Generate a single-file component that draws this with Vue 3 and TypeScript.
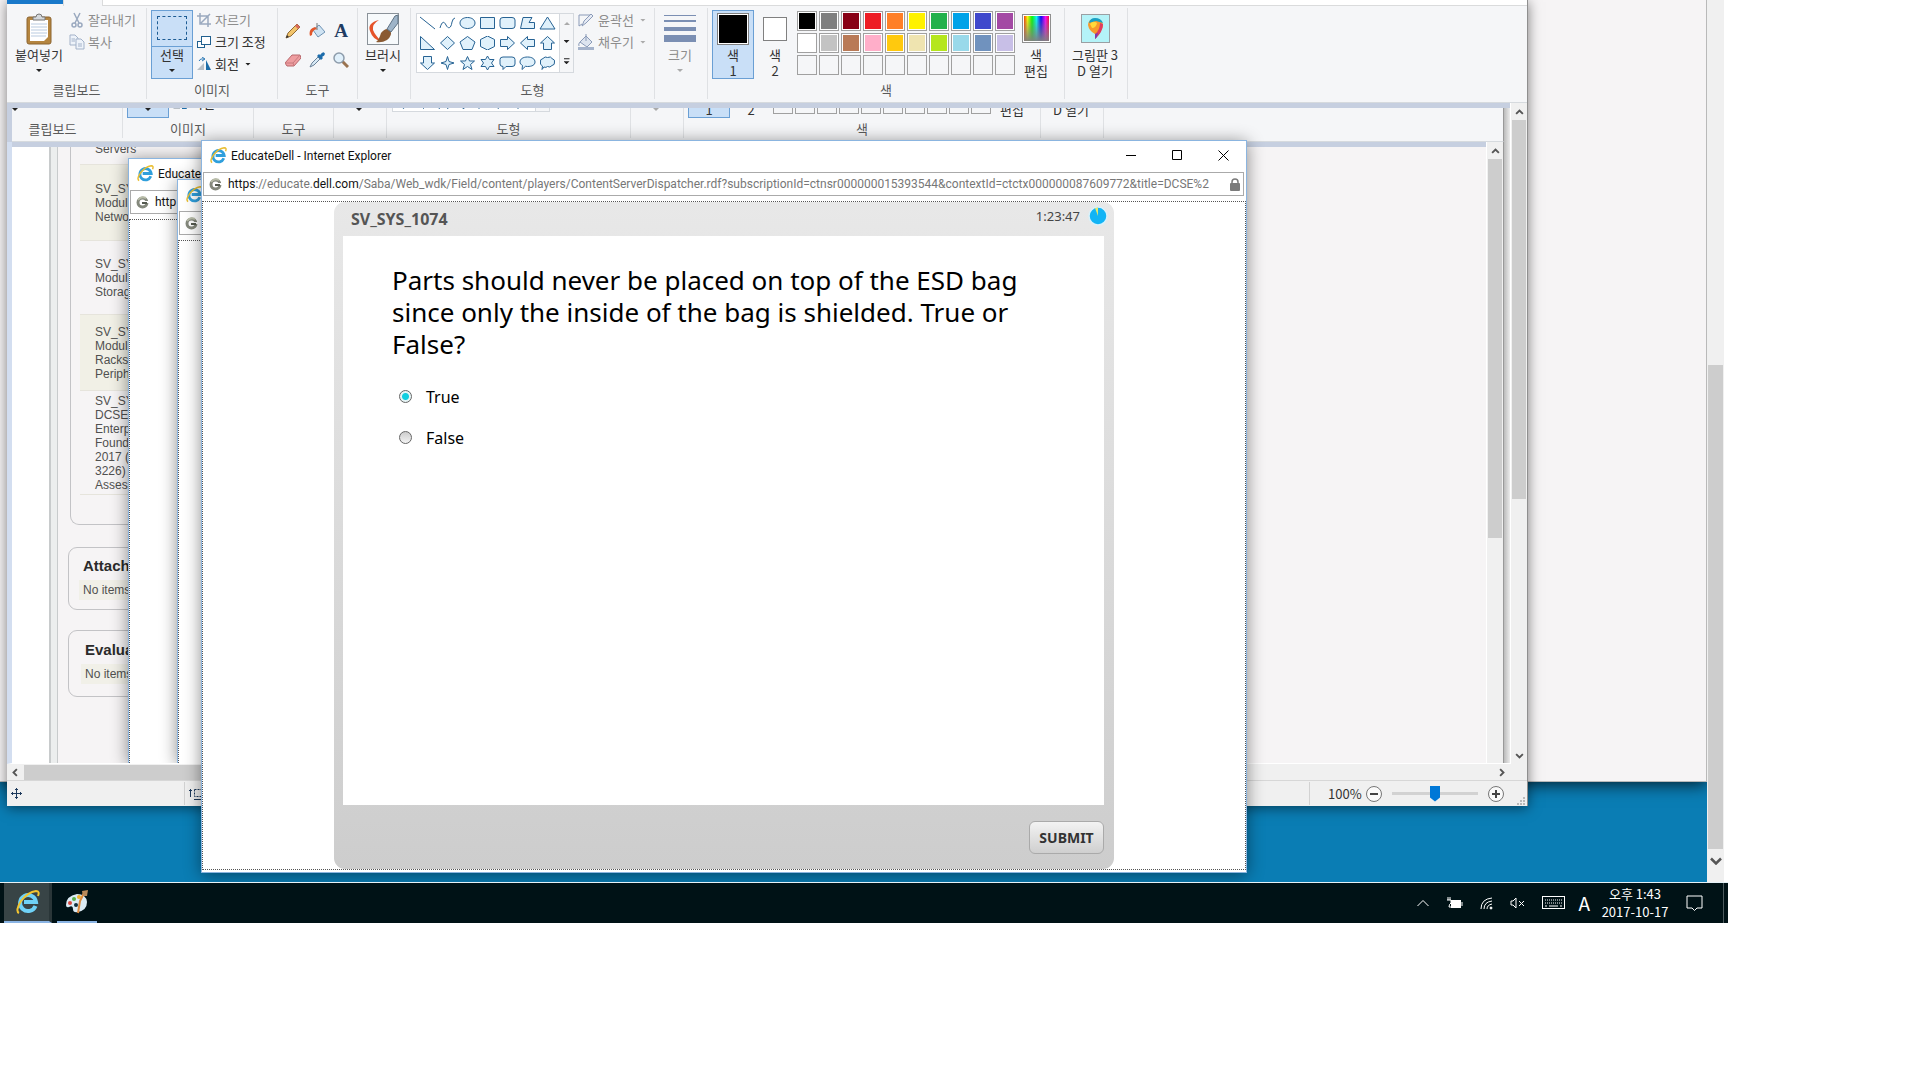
<script setup lang="ts">
import { ref } from 'vue'

interface Popup {
  id: string
  title: string
  scheme: string
  left: number
  top: number
  width: number
  height: number
  front: boolean
}

const strips: string[] = ['live', 'pasted']

const popups: Popup[] = [
  { id: 'back', title: 'Educate', scheme: 'http', left: 128, top: 158, width: 120, height: 605, front: false },
  { id: 'middle', title: '', scheme: '', left: 177, top: 179, width: 60, height: 584, front: false },
  { id: 'front', title: 'EducateDell - Internet Explorer', scheme: 'https', left: 201, top: 140, width: 1046, height: 733, front: true },
]

const shapes: string[] = [
  'M1 1L16 13',
  'M1 12C3 5 5 5 7 9S12 13 13 6Q14 2 16 2',
  'M8.500 1.500C4 1.500 1 4 1 7S4 12.500 8.500 12.500S16 10 16 7S13 1.500 8.500 1.500Z',
  'M1.500 1.500H15.500V12.500H1.500Z',
  'M4 1.500H13Q16 1.500 16 4V10Q16 12.500 13 12.500H4Q1 12.500 1 10V4Q1 1.500 4 1.500Z',
  'M4 1.500H13L10 6.500H15.500V12.500H1.500Z',
  'M8.500 1L16 13H1Z',
  'M1.500 0.500V13.500H15.500Z',
  'M8.500 0.500L15.500 7L8.500 13.500L1.500 7Z',
  'M8.500 0.500L16 6L13 13.500H4L1 6Z',
  'M8.500 0L15.500 3.500V10.500L8.500 14L1.500 10.500V3.500Z',
  'M1.500 3.500H8.500V0.500L15.500 7L8.500 13.500V10.500H1.500Z',
  'M15.500 3.500H8.500V0.500L1.500 7L8.500 13.500V10.500H15.500Z',
  'M8.500 0.500L15.500 7H12.500V13.500H4.500V7H1.500Z',
  'M8.500 13.500L15.500 7H12.500V0.500H4.500V7H1.500Z',
  'M8.500 0.500L10 5.500L15 7L10 8.500L8.500 13.500L7 8.500L2 7L7 5.500Z',
  'M8.500 0.500L10.500 5H15.500L11.500 8.500L13 13.500L8.500 10.500L4 13.500L5.500 8.500L1.500 5H6.500Z',
  'M8.500 0L10.500 3.500H15L12.500 7L15 10.500H10.500L8.500 14L6.500 10.500H2L4.500 7L2 3.500H6.500Z',
  'M4 1H13Q16 1 16 3.500V8Q16 10.500 13 10.500H7L4 13.500V10.500Q1 10.500 1 8V3.500Q1 1 4 1Z',
  'M8.500 1C13 1 16 3 16 6S13 10.500 8.500 10.500L6.500 10.300L3 13.500L3.500 9.500C2 8.700 1 7.500 1 6C1 3 4 1 8.500 1Z',
  'M4 2.500Q6 0 8.500 1.500Q12 0 13 2.500Q16.500 4 15.500 6Q16 9 13 9.500Q11 12 8.500 10.500Q7 12 5 11L3 13.500L3.500 10Q0.500 8.500 1.500 6Q0.500 3.500 4 2.500Z',
]

const palette: string[] = [
  '#000000', '#7f7f7f', '#880015', '#ed1c24', '#ff7f27', '#fff200', '#22b14c', '#00a2e8', '#3f48cc', '#a349a4',
  '#ffffff', '#c3c3c3', '#b97a57', '#ffaec9', '#ffc90e', '#efe4b0', '#b5e61d', '#99d9ea', '#7092be', '#c8bfe7',
  '', '', '', '', '', '', '', '', '', '',
]

const modules: string[][] = [
  ['SV_SY', 'Modul', 'Netwo'],
  ['SV_SY', 'Modul', 'Storag'],
  ['SV_SY', 'Modul', 'Racks', 'Periph'],
  ['SV_SY', 'DCSE', 'Enterp', 'Found', '2017 (', '3226)', 'Asses'],
]

const answer = ref<string>('true')
const zoom = ref<number>(50)
</script>

<template>
  <main class="desktop">
    <div class="screen">
      <div class="back-page"></div>
      <div class="page-scroll">
        <div class="page-thumb"></div>
        <svg class="chev" viewBox="0 0 12 8"><path d="M1 1.500L6 6.500L11 1.500" /></svg>
      </div>

      <section class="paint">
        <div v-for="strip in strips" :key="strip" class="strip" :class="strip">
          <div class="ribbon">
            <div class="tabs"><span class="file-tab"></span><span class="home-tab"></span><span class="tab-line"></span></div>
            <div class="groups">
              <div class="group g-clip">
                <div class="tools">
                  <button class="big">
                    <span class="pic">
                      <svg width="26" height="32" viewBox="0 0 26 32">
                        <rect x="1" y="4" width="24" height="27" rx="2" fill="#b5853f" stroke="#8c6430" />
                        <path d="M4 7H22V24L18 28H4Z" fill="#fff" />
                        <path d="M5 11H21M5 14H21M5 17H21M5 20H21M5 23H20" stroke="#b9cbe0" />
                        <path d="M7 7V4H10Q10 1 13 1T16 4H19V7Z" fill="#d4d8dc" stroke="#777" />
                      </svg>
                    </span>
                    <span>붙여넣기</span><i class="tri"></i>
                  </button>
                  <div class="stack">
                    <button class="small off">
                      <svg width="16" height="16" viewBox="0 0 16 16" fill="none" stroke="#9aa9bf" stroke-width="1.500"><path d="M5 1L10 11M11 1L6 11" /><circle cx="5" cy="13" r="2" /><circle cx="11" cy="13" r="2" /></svg>
                      <span>잘라내기</span>
                    </button>
                    <button class="small off">
                      <svg width="16" height="16" viewBox="0 0 16 16" fill="#eef3fa" stroke="#a3b2c9"><path d="M1 1H6L9 4V11H1Z" /><path d="M7 5H12L15 8V15H7Z" /><path d="M2.500 5H6M2.500 7H6M9 10H13M9 12H13" /></svg>
                      <span>복사</span>
                    </button>
                  </div>
                </div>
                <p>클립보드</p>
              </div>

              <div class="group g-image">
                <div class="tools">
                  <button class="big picked split">
                    <span class="pic"><i class="marquee"></i></span>
                    <span>선택</span><i class="tri"></i>
                  </button>
                  <div class="stack">
                    <button class="small off">
                      <svg width="14" height="14" viewBox="0 0 14 14" fill="none" stroke="#9aa9bf" stroke-width="1.500"><path d="M3 0V11H14M0 3H11V14M4 10L13 1" /></svg>
                      <span>자르기</span>
                    </button>
                    <button class="small">
                      <svg width="14" height="14" viewBox="0 0 14 14" fill="#fff" stroke="#21608f"><rect x="0.500" y="6.500" width="7" height="6" /><rect x="4.500" y="1.500" width="9" height="8" /></svg>
                      <span>크기 조정</span>
                    </button>
                    <button class="small">
                      <svg width="14" height="14" viewBox="0 0 14 14"><path d="M0 13H7V6Z" fill="#b8bfc6" /><path d="M9 13V3L14 13Z" fill="#1d6da8" /><path d="M2 4Q3 1 7 2M5 0L8 2L5 4" fill="none" stroke="#2b78b5" /></svg>
                      <span>회전</span><i class="tri"></i>
                    </button>
                  </div>
                </div>
                <p>이미지</p>
              </div>

              <div class="group g-tools">
                <div class="tools tool-grid">
                  <button class="tool" aria-label="연필"><svg viewBox="0 0 16 16"><path d="M1 15L3 10L12 1L15 4L6 13Z" fill="#f2c46b" stroke="#8f6a35" /><path d="M12 1L15 4L13 6L10 3Z" fill="#d96a5c" /><path d="M1 15L2 12L4 14Z" fill="#333" /></svg></button>
                  <button class="tool" aria-label="채우기"><svg viewBox="0 0 16 16"><path d="M4 7L10 2L16 9L9 14Z" fill="#cfe3f3" stroke="#6f93b3" /><path d="M8 0V7" stroke="#777" /><path d="M1 13Q-1 6 6 4L8 6Q3 7 3 12Z" fill="#e2572b" /></svg></button>
                  <button class="tool letter" aria-label="텍스트">A</button>
                  <button class="tool" aria-label="지우개"><svg viewBox="0 0 16 16"><path d="M0 11L7 3H15L16 6L9 14H2Z" fill="#ee9da0" stroke="#b8686c" /><path d="M0 11H8L15 3M8 11L9 14" stroke="#c87b7f" fill="none" /></svg></button>
                  <button class="tool" aria-label="색 선택"><svg viewBox="0 0 16 16"><path d="M1 15L3 11L9 5L11 7L5 13Z" fill="#d7e9f5" stroke="#6b8299" /><path d="M8 4L10 2L11 3Q14 -1 15.500 1Q17 3 13 5L14 6L12 8Z" fill="#1c6cab" /></svg></button>
                  <button class="tool" aria-label="돋보기"><svg viewBox="0 0 16 16"><path d="M9 9L15 15" stroke="#9a7350" stroke-width="3" /><circle cx="6" cy="6" r="5" fill="#e0f0fb" stroke="#8d9cab" stroke-width="1.500" /></svg></button>
                </div>
                <p>도구</p>
              </div>

              <div class="group g-brush">
                <div class="tools">
                  <button class="big">
                    <span class="pic">
                      <svg width="32" height="32" viewBox="0 0 32 32">
                        <rect x="0.500" y="0.500" width="31" height="31" fill="#f7fafc" stroke="#8a9299" />
                        <path d="M12 7Q0 10 3 18Q6 27 14 28Q8 22 6 17Q5 11 12 7Z" fill="#e5532a" />
                        <path d="M9 29Q12 27 14 20Q19 14 23 17Q26 22 20 27Q15 30 9 29Z" fill="#8a5a32" />
                        <path d="M20 16L28 3L31 2V10L24 19Z" fill="#9eb4c8" stroke="#5e7284" />
                      </svg>
                    </span>
                    <span>브러시</span><i class="tri"></i>
                  </button>
                </div>
              </div>

              <div class="group g-shapes">
                <div class="tools">
                  <div class="gallery">
                    <div class="shape-grid">
                      <svg v-for="(d, i) in shapes" :key="i" width="17" height="14" viewBox="0 0 17 14"><path :d="d" :class="{ open: i < 2 }" /></svg>
                    </div>
                    <div class="gallery-nav"><i class="tri up"></i><i class="tri"></i><i class="tri more"></i></div>
                  </div>
                  <div class="stack">
                    <button class="small off">
                      <svg width="16" height="16" viewBox="0 0 16 16" fill="#e6ebf5" stroke="#8b9bb8"><path d="M1 3H12M1 3V14L4 12" fill="none" /><path d="M4 14L6 9L13 2L15 4L8 11Z" /></svg>
                      <span>윤곽선</span><i class="tri"></i>
                    </button>
                    <button class="small off">
                      <svg width="16" height="16" viewBox="0 0 16 16"><path d="M2 8L8 2L14 8L9 13Z" fill="#dde4ef" stroke="#8b9bb8" /><path d="M8 0V7M2 8Q0 10 1 12" stroke="#8b9bb8" fill="none" /><path d="M0 13H16V16H0Z" fill="#a5b3cb" /></svg>
                      <span>채우기</span><i class="tri"></i>
                    </button>
                  </div>
                </div>
                <p>도형</p>
              </div>

              <div class="group g-size">
                <div class="tools">
                  <button class="big off">
                    <span class="pic">
                      <svg width="32" height="28" viewBox="0 0 32 28" fill="#7b8fb3"><rect width="32" height="1" /><rect y="5" width="32" height="2" /><rect y="12" width="32" height="4" /><rect y="20" width="32" height="7" /></svg>
                    </span>
                    <span>크기</span><i class="tri"></i>
                  </button>
                </div>
              </div>

              <div class="group g-colours">
                <div class="tools">
                  <button class="big picked"><span class="pic"><i class="ink first"></i></span><span>색</span><span>1</span></button>
                  <button class="big"><span class="pic"><i class="ink"></i></span><span>색</span><span>2</span></button>
                  <div class="palette">
                    <button v-for="(c, i) in palette" :key="i" class="chip" :class="{ empty: !c }" :aria-label="c || '빈 색'"><i :style="{ background: c }"></i></button>
                  </div>
                  <button class="big edit"><span class="pic"><i class="spectrum"></i></span><span>색</span><span>편집</span></button>
                </div>
                <p>색</p>
              </div>

              <div class="group g-three">
                <div class="tools">
                  <button class="big">
                    <span class="pic">
                      <svg width="29" height="29" viewBox="0 0 29 29">
                        <rect x="0.500" y="0.500" width="28" height="28" fill="#b4f3f8" stroke="#9a9fa3" />
                        <path d="M14 5Q7 5 7 11Q8 17 14 20V25Q20 19 22 12Q22 5 14 5Z" fill="#f79a2b" />
                        <path d="M8 9Q9 4 14 4Q20 4 22 9L15 7Z" fill="#18a0c4" />
                        <path d="M22 10Q22 18 14 25V20Q19 16 19 9Z" fill="#e03b62" />
                        <path d="M14 20L17 19L16 23L14 25Z" fill="#7b3bb0" />
                        <path d="M9 10Q12 6 16 9Q15 14 11 14Z" fill="#ffd93b" />
                      </svg>
                    </span>
                    <span>그림판 3</span><span>D 열기</span>
                  </button>
                </div>
              </div>
            </div>
          </div>
        </div>

        <div class="v-scroll">
          <svg class="chev" viewBox="0 0 12 8"><path d="M1.500 6.500L6 2L10.500 6.500" /></svg>
          <div class="thumb"></div>
          <svg class="chev" viewBox="0 0 12 8"><path d="M1.500 1.500L6 6L10.500 1.500" /></svg>
        </div>

        <div class="canvas">
          <div class="page">
            <div class="gutter"></div>
            <div class="sash"></div>
            <div class="course">
              <div class="card module-card">
                <table>
                  <tbody>
                    <tr class="lead"><td>Servers</td></tr>
                    <tr v-for="(lines, i) in modules" :key="i" :class="'m' + i">
                      <td><div v-for="(line, j) in lines" :key="j">{{ line }}</div></td>
                    </tr>
                  </tbody>
                </table>
              </div>
              <div class="card attach"><h3>Attach</h3><p>No items</p></div>
              <div class="card evaluate"><h3>Evalua</h3><p>No items</p></div>
            </div>
          </div>
          <div class="v-scroll inner">
            <svg class="chev" viewBox="0 0 12 8"><path d="M1.500 6.500L6 2L10.500 6.500" /></svg>
            <div class="thumb"></div>
          </div>
        </div>

        <div class="h-scroll">
          <svg class="chev" viewBox="0 0 8 12"><path d="M6.500 1.500L2 6L6.500 10.500" /></svg>
          <div class="h-thumb"></div>
          <svg class="chev" viewBox="0 0 8 12"><path d="M1.500 1.500L6 6L1.500 10.500" /></svg>
        </div>

        <footer class="status">
          <div class="cell pos">
            <svg width="11" height="11" viewBox="0 0 11 11" fill="none" stroke="#1e3a5c"><path d="M5.500 0V11M0 5.500H11M4 1.500H7M4 9.500H7M1.500 4V7M9.500 4V7" /></svg>
          </div>
          <div class="cell">
            <svg width="16" height="12" viewBox="0 0 16 12" fill="none" stroke="#1e3a5c"><path d="M1.500 1V9M0 2.500H3M5 11.500H16" /><rect x="5.500" y="1.500" width="9" height="7" stroke-dasharray="2 1" /></svg>
          </div>
          <div class="zoom-cell">
            <label for="zoom">100%</label>
            <button class="round" aria-label="축소"><svg viewBox="0 0 16 16"><circle cx="8" cy="8" r="7.500" /><path d="M4 8H12" /></svg></button>
            <input id="zoom" v-model="zoom" type="range" min="0" max="100" />
            <button class="round plus" aria-label="확대"><svg viewBox="0 0 16 16"><circle cx="8" cy="8" r="7.500" /><path d="M4 8H12M8 4V12" /></svg></button>
            <svg class="grip" width="8" height="8" viewBox="0 0 8 8" fill="#b9b9b9"><path d="M6 0h2v2h-2zM3 3h2v2h-2zM6 3h2v2h-2zM0 6h2v2h-2zM3 6h2v2h-2zM6 6h2v2h-2z" /></svg>
          </div>
        </footer>
      </section>

      <section
        v-for="p in popups"
        :key="p.id"
        class="popup"
        :class="{ front: p.front }"
        :style="{ left: p.left + 'px', top: p.top + 'px', width: p.width + 'px', height: p.height + 'px' }"
      >
        <header class="title">
          <svg class="ie" width="17" height="17" viewBox="0 0 24 24">
            <path d="M19.500 16A8 8 0 1 1 20 12H8" fill="none" stroke="#2f9fdc" stroke-width="4" />
            <path d="M3 22Q-1 20 5 11Q12 2 20 1Q24 1 22 6" fill="none" stroke="#e9bd2f" stroke-width="2" />
          </svg>
          <span class="caption">{{ p.title }}</span>
          <div v-if="p.front" class="controls">
            <button aria-label="최소화"><svg viewBox="0 0 11 11"><path d="M0 5.500H10" /></svg></button>
            <button aria-label="최대화"><svg viewBox="0 0 11 11"><path d="M0.500 0.500H9.500V9.500H0.500Z" /></svg></button>
            <button aria-label="닫기"><svg viewBox="0 0 11 11"><path d="M0.500 0.500L10.500 10.500M10.500 0.500L0.500 10.500" /></svg></button>
          </div>
        </header>
        <div class="address">
          <svg class="fav" width="13" height="13" viewBox="0 0 13 13"><circle cx="6.500" cy="6.500" r="4.500" fill="#fff" stroke="#84887c" stroke-width="3" /><path d="M2 4Q5 0 10 2" fill="none" stroke="#b9bda9" stroke-width="2" /><path d="M8 6H13V3" fill="none" stroke="#fff" stroke-width="2" /><path d="M6 7H11" stroke="#555a50" stroke-width="2" /></svg>
          <div class="url"><b>{{ p.scheme }}</b><template v-if="p.front">://educate.<b>dell.com</b>/Saba/Web_wdk/Field/content/players/ContentServerDispatcher.rdf?subscriptionId=ctnsr000000015393544&amp;contextId=ctctx000000087609772&amp;title=DCSE%2</template></div>
          <svg v-if="p.front" class="lock" width="10" height="13" viewBox="0 0 10 13"><path d="M2 6V4Q2 1 5 1T8 4V6" fill="none" stroke="#7b7b7b" stroke-width="1.500" /><rect y="5" width="10" height="8" rx="1" fill="#7b7b7b" /></svg>
        </div>
        <div class="document">
          <article v-if="p.front" class="player">
            <header>
              <h1>SV_SYS_1074</h1>
              <div class="timer">
                <time>1:23:47</time>
                <svg width="20" height="20" viewBox="0 0 20 20"><circle cx="10" cy="10" r="9" fill="#12b4f5" stroke="#d8f1fb" stroke-width="1.500" /><path d="M10 10L7 2Q8.500 1.500 10 1.500Z" fill="#e6e86a" /></svg>
              </div>
            </header>
            <form class="quiz" @submit.prevent>
              <h2>Parts should never be placed on top of the ESD bag since only the inside of the bag is shielded. True or False?</h2>
              <label><input v-model="answer" type="radio" name="answer" value="true" />True</label>
              <label><input v-model="answer" type="radio" name="answer" value="false" />False</label>
            </form>
            <footer><button class="submit">SUBMIT</button></footer>
          </article>
        </div>
      </section>
    </div>

    <nav class="taskbar">
      <button class="task active" aria-label="Internet Explorer">
        <svg width="24" height="24" viewBox="0 0 24 24">
          <path d="M19.500 16A8 8 0 1 1 20 12H8" fill="none" stroke="#6fd2f7" stroke-width="4" />
          <path d="M3 23Q-1 21 5 11Q12 2 20 1Q24 1 22 6" fill="none" stroke="#f2c531" stroke-width="2" />
        </svg>
      </button>
      <button class="task" aria-label="그림판">
        <svg width="24" height="24" viewBox="0 0 24 24">
          <path d="M12 4Q1 6 1 15Q1 18 4 17Q8 15 8 19Q8 23 13 22Q22 20 22 12Q21 4 12 4Z" fill="#dcebf4" />
          <circle cx="5" cy="13" r="2" fill="#d9473f" /><circle cx="9" cy="9" r="2" fill="#59b04a" /><circle cx="14" cy="7" r="2" fill="#f0b22e" /><circle cx="11" cy="15" r="2" fill="#12303f" />
          <path d="M13 23L15 11L19 3" fill="none" stroke="#df8a3c" stroke-width="2" /><path d="M17 1L23 0L22 6L18 6Z" fill="#b98a5b" />
        </svg>
      </button>
      <div class="tray">
        <button aria-label="숨겨진 아이콘"><svg width="12" height="8" viewBox="0 0 12 8"><path d="M0.500 7L6 1.500L11.500 7" /></svg></button>
        <button aria-label="배터리"><svg width="17" height="12" viewBox="0 0 17 12"><path d="M1 3H5V6Q3 7 3 10H7M2 0V3M4 0V3" /><rect x="5.500" y="3.500" width="9" height="7" fill="#fff" /><path d="M16 5V9" /></svg></button>
        <button aria-label="네트워크"><svg width="13" height="13" viewBox="0 0 13 13"><path d="M1 12Q1 2 12 1M4 12Q4 5 12 4M7 12Q7 8 12 7" /><circle cx="11" cy="11" r="1" fill="#fff" /></svg></button>
        <button aria-label="음소거"><svg width="15" height="12" viewBox="0 0 15 12"><path d="M1 4H3L6 1V11L3 8H1ZM9 4L14 9M14 4L9 9" /></svg></button>
        <button aria-label="키보드"><svg width="23" height="14" viewBox="0 0 23 14"><rect x="0.500" y="0.500" width="22" height="12" /><path d="M3 4H21M3 7H21" stroke-dasharray="1 1" /><path d="M3 10H5M7 10H16M18 10H20" /></svg></button>
        <button class="ime">A</button>
        <time class="clock"><span>오후 1:43</span><span>2017-10-17</span></time>
        <button aria-label="알림"><svg width="17" height="17" viewBox="0 0 17 17"><path d="M1 1H16V13H11L8.500 15.500L6 13H1Z" /></svg></button>
      </div>
      <i class="peek"></i>
    </nav>
  </main>
</template>

<style>
body { background: #fff; }
</style>

<style scoped>
* { box-sizing: border-box; }
.desktop { width: 90%; font: 13px/16px "Noto Sans CJK KR", sans-serif; color: #333; }
h1, h2, h3, p { margin: 0; }
button { display: flex; align-items: center; justify-content: center; border: 0; padding: 0; background: none; font: inherit; color: inherit; white-space: nowrap; }
svg { display: block; flex: none; }

.screen { position: relative; height: 882px; overflow: hidden; background: #0a7db4; }
.back-page { margin-right: 21px; height: 782px; background: #f6f4f5; border: solid #b9b9b9; border-width: 0 1px 1px 0; box-shadow: 0 2px 16px rgba(0, 0, 0, 0.8); }
.page-scroll { position: absolute; top: 0; right: 4px; bottom: 0; width: 17px; padding: 365px 1px 0; background: #f0f0f0; box-shadow: 4px 0 #fff; }
.page-thumb { height: 484px; background: #cdcdcd; }
.chev { width: 9px; height: 6px; fill: none; stroke: #555; stroke-width: 2.500; }
.page-scroll .chev { width: 12px; height: 8px; margin: 8px auto; }

.paint { position: absolute; left: 7px; right: 200px; top: 0; display: grid; grid-template-columns: minmax(0, 1fr) 17px; background: #f0f0f0; border-right: 1px solid #8f8f8f; box-shadow: 0 2px 12px rgba(0, 0, 0, 0.5); }
.strip { background: #f5f6f8; }
.live { grid-column: 1 / 3; height: 103px; }
.pasted { height: 39px; display: flex; align-items: flex-end; overflow: hidden; border: solid #c6cfe0; border-width: 5px 0 0 5px; background: linear-gradient(to left, #ececec, #bbb) right / 6px 100% no-repeat; }
.pasted .ribbon { flex: 1; margin-left: -29px; margin-right: 6px; border-right: 1px solid #999; }
.pasted + .v-scroll { grid-row: 2 / 4; grid-column: 2; }
.ribbon { height: 103px; background: #f5f6f8; border-bottom: 1px solid #d6dade; }
.tabs { display: flex; height: 6px; }
.file-tab { width: 56px; height: 4px; background: #1979ca; }
.home-tab { width: 40px; border: solid #dadbdc; border-width: 0 1px; }
.tab-line { flex: 1; background: #fff; border-bottom: 1px solid #dadbdc; }
.groups { display: flex; padding-top: 2px; }
.group { display: flex; flex-direction: column; flex: none; height: 91px; padding-top: 2px; border-right: 1px solid #dfe1e4; }
.group p { text-align: center; color: #5a5a5a; line-height: 16px; }
.tools { display: flex; height: 72px; padding-left: 4px; }
.g-clip { width: 140px; }
.g-image { width: 131px; }
.g-tools { width: 80px; }
.g-brush, .g-size { width: 53px; }
.g-shapes { width: 244px; }
.g-shapes .tools { padding-left: 5px; }
.g-colours { width: 357px; }
.g-three { width: 63px; }
.g-three .tools { padding-left: 0; }
.big { flex-direction: column; justify-content: flex-start; flex: none; width: 42px; height: 69px; }
.g-clip .big { width: 56px; }
.g-three .big { width: 60px; }
.big > span { line-height: 16px; }
.big > .pic { display: flex; align-items: center; justify-content: center; height: 37px; }
.tri { flex: none; width: 6px; height: 3px; background: #222; clip-path: polygon(0 0, 100% 0, 50% 100%); }
.big .tri { margin-top: 6px; }
.small .tri { margin-left: 2px; }
.picked { background: #c9dff7; outline: 1px solid #6a9fd4; outline-offset: -1px; }
.split .pic { align-self: stretch; border-bottom: 1px solid #6a9fd4; }
.marquee { width: 30px; height: 24px; border: 1px dashed #1d5c94; }
.stack { display: flex; flex-direction: column; margin-top: -1px; padding-left: 4px; }
.small { justify-content: flex-start; height: 22px; gap: 4px; }
.g-clip .stack { padding-left: 2px; }
.g-clip .small { gap: 3px; }
.off { color: #8d8d8d; }
.off .tri, .tri.up { background: #aaa; }
.tool-grid { display: grid; grid-template-columns: 24px 24px 24px; grid-template-rows: 29px 29px; padding: 6px 0 0 3px; }
.tool svg { width: 16px; height: 16px; }
.letter { font: bold 19px/24px "Liberation Serif", serif; color: #1f3c63; }
.gallery { display: flex; width: 158px; height: 60px; margin-top: 3px; border: 1px solid #d5d9de; background: #fff; }
.shape-grid { flex: 1; display: grid; grid-template-columns: repeat(7, 20px); grid-template-rows: repeat(3, 20px); align-items: center; align-content: center; padding-left: 2px; }
.shape-grid path { fill: #e0f1fb; stroke: #276394; }
.shape-grid .open { fill: none; }
.gallery-nav { width: 14px; border-left: 1px solid #d5d9de; background: #f5f6f8; display: flex; flex-direction: column; align-items: center; justify-content: space-around; }
.tri.up { transform: rotate(180deg); }
.tri.more { height: 6px; clip-path: polygon(0 0, 100% 0, 100% 1px, 0 1px, 0 3px, 100% 3px, 50% 100%, 0 3px); }
.ink { width: 24px; height: 24px; border: 1px solid #808080; background: #fff; }
.ink.first { width: 32px; height: 32px; background: #000; box-shadow: inset 0 0 0 1px #fff; }
.palette { display: grid; grid-template-columns: repeat(10, 22px); grid-template-rows: repeat(3, 22px); padding: 1px 0 0 1px; }
.chip { width: 20px; height: 20px; border: 1px solid #a0a0a0; background: #fff; padding: 1px; }
.chip i { width: 16px; height: 16px; }
.chip.empty { background: none; }
.edit { width: 38px; }
.spectrum { width: 29px; height: 29px; border: 1px solid #8f8f8f; background: linear-gradient(to bottom, transparent, #808080), linear-gradient(to right, red, #ff0, #0f0, #0ff, #00f, #f0f, red); box-shadow: inset 0 0 0 1px #fff; }

.v-scroll { display: flex; flex-direction: column; justify-content: space-between; align-items: center; padding: 6px 1px 5px; border-left: 1px solid #fff; background: #f0f0f0; }
.thumb { width: 100%; height: 379px; background: #cdcdcd; margin: 5px 0 auto; }
.canvas { display: flex; height: 622px; overflow: hidden; border-left: 5px solid #d3def0; padding-right: 6px; background: linear-gradient(to left, #ececec, #bbb) right / 6px 100% no-repeat; border-bottom: 1px solid #fff; }
.inner { width: 18px; border-right: 1px solid #999; }
.page { flex: 1; display: flex; min-width: 0; background: #f6f4f5; border-top: 5px solid #c6cfe0; }
.gutter { width: 37px; background: #fff; }
.sash { width: 9px; background: #eceeee; border: solid #c8cbcc; border-width: 0 1px 0 2px; }
.course { flex: 1; max-width: 640px; padding-left: 10px; font: 12px/14px "Liberation Sans", sans-serif; color: #505050; }
.card { border: 1px solid #c3c3c6; border-radius: 9px; white-space: nowrap; }
.module-card { margin-left: 2px; height: 378px; border-top: 0; border-radius: 0 0 9px 9px; padding-left: 9px; overflow: hidden; }
table { width: 100%; border-collapse: collapse; }
td { padding: 2px 0 0 15px; border-bottom: 1px solid #e6e4dc; vertical-align: middle; }
.lead td { height: 17px; padding-top: 0; padding-bottom: 12px; line-height: 4px; }
.m0 td, .m2 td { height: 76px; background: #f1f0e6; }
.m1 td { height: 74px; }
.m3 td { height: 104px; }
.attach { margin-top: 22px; height: 63px; padding: 10px 0 0 10px; }
.evaluate { margin-top: 20px; height: 67px; padding: 11px 0 0 12px; }
.card h3 { font-size: 15px; line-height: 16px; color: #2b2b2b; padding-left: 4px; }
.card p { margin-top: 6px; padding-left: 4px; line-height: 20px; background: #f1f0e8; }

.h-scroll { grid-column: 1 / 3; display: flex; align-items: center; height: 16px; padding: 0 22px 0 5px; }
.h-scroll .chev { width: 6px; height: 9px; }
.h-thumb { width: 1000px; height: 15px; margin: 0 auto 0 6px; background: #cdcdcd; }
.status { grid-column: 1 / 3; display: flex; align-items: center; height: 26px; border-top: 1px solid #d7d7d7; }
.cell { display: flex; align-items: center; height: 23px; padding-left: 4px; }
.pos { width: 178px; border-right: 1px solid #d2d2d2; }
.zoom-cell { display: flex; align-items: center; height: 23px; margin-left: auto; padding: 0 2px 0 18px; border-left: 1px solid #d2d2d2; }
.zoom-cell label { width: 38px; }
.round { width: 16px; height: 16px; }
.round svg { width: 16px; height: 16px; fill: #fafafa; stroke: #777; }
.round path { stroke: #444; stroke-width: 2; }
.plus { margin-right: 13px; }
.grip { align-self: flex-end; }
input[type="range"] { appearance: none; width: 86px; height: 16px; margin: 0 10px; background: linear-gradient(#d2d2d2, #d2d2d2) center / 100% 3px no-repeat; }
input[type="range"]::-webkit-slider-runnable-track { height: 16px; }
input[type="range"]::-webkit-slider-thumb { appearance: none; width: 10px; height: 16px; background: #0078d7; clip-path: polygon(0 0, 100% 0, 100% 75%, 50% 100%, 0 75%); }

.popup { position: absolute; display: flex; flex-direction: column; background: #fff; border: 1px solid #8bb5e0; border-bottom: 0; box-shadow: 0 2px 16px rgba(0, 0, 0, 0.45); clip-path: inset(-20px -20px 0 -20px); }
.front { border-bottom: 1px solid #8bb5e0; padding-bottom: 2px; clip-path: none; }
.title { display: flex; flex: none; align-items: center; height: 31px; padding: 0 0 2px 8px; overflow: hidden; }
.caption { flex: 1; padding-left: 4px; color: #111; font-family: Roboto, sans-serif; font-size: 12px; white-space: nowrap; }
.controls { display: flex; }
.controls button { width: 46px; height: 30px; }
.controls svg { width: 11px; height: 11px; fill: none; stroke: #000; }
.address { display: flex; flex: none; align-items: center; height: 24px; margin: 0 2px 5px 1px; padding: 0 3px 0 5px; border: 1px solid #aaa; overflow: hidden; }
.url { flex: 1; padding-left: 6px; color: #777; font-family: Roboto, sans-serif; font-size: 12px; white-space: nowrap; overflow: hidden; }
.url b { font-weight: normal; color: #111; }
.document { flex: 1; display: flex; justify-content: center; min-height: 0; border: 1px dotted #555; overflow: hidden; }
.popup:not(.front) .document { border-bottom: 0; }

.player { width: 780px; display: flex; flex-direction: column; border-radius: 11px; background: linear-gradient(#e8e8e8, #cdcdcd); font-family: "Noto Sans", sans-serif; }
.player header { display: flex; justify-content: space-between; height: 34px; padding: 0 6px 0 17px; }
.player h1 { padding-top: 5px; font-size: 16px; line-height: 24px; color: #555; }
.timer { display: flex; align-items: center; gap: 8px; height: 28px; font-size: 13px; color: #444; }
.quiz { flex: 1; margin: 0 10px 0 9px; padding: 28px 49px 0; background: #fff; color: #000; }
.quiz h2 { margin-bottom: 16px; font-size: 26px; line-height: 32px; font-weight: normal; }
.quiz label { display: flex; align-items: center; height: 41px; font-size: 16px; }
.quiz input { appearance: none; width: 13px; height: 13px; margin: 0 14px 0 7px; border: 1px solid #666; border-radius: 50%; background: linear-gradient(#ccc, #f4f4f4); }
.quiz input:checked { background: radial-gradient(circle, #12cfe0 0 3px, #e6f5f6 4px); }
.player footer { display: flex; justify-content: flex-end; height: 64px; padding: 16px 10px 0 0; }
.submit { width: 75px; height: 33px; border: 1px solid #aaa; border-radius: 6px; background: linear-gradient(#f3f3f3, #cfcfcf); font-weight: bold; font-size: 14px; color: #333; }

.taskbar { display: flex; height: 41px; padding-left: 4px; border-top: 1px solid #e6f2f8; background: #001216; color: #fff; }
.task { width: 40px; border-bottom: 2px solid #8ab4e4; }
.active { width: 48px; margin-right: 5px; padding-left: 3px; background: #384446; border-right: 3px solid #2a3638; }
.tray { display: flex; align-items: center; margin-left: auto; margin-right: 20px; }
.tray svg { fill: none; stroke: #fff; }
.tray button { margin-left: 17px; }
.tray .ime { margin-left: 13px; font-size: 19px; }
.clock { display: flex; flex-direction: column; align-items: center; width: 68px; margin-left: 11px; line-height: 18px; }
.peek { width: 5px; border-left: 1px solid #4d5b5e; }
</style>
